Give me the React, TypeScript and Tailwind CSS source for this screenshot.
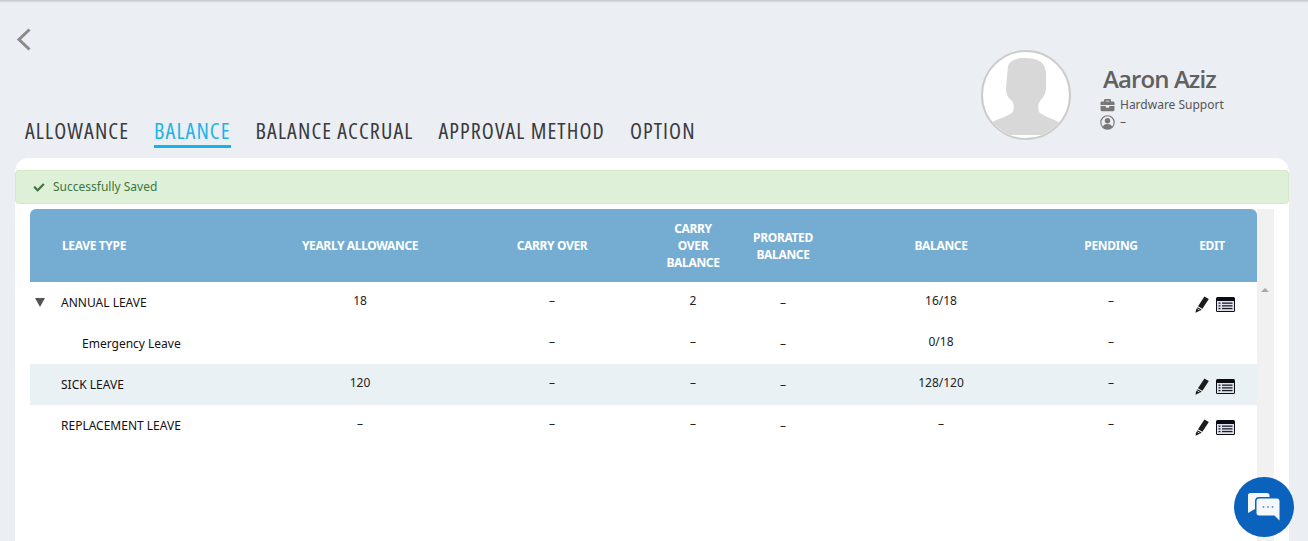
import { FaBriefcase, FaCheck } from "react-icons/fa";

const tabs = ["ALLOWANCE", "BALANCE", "BALANCE ACCRUAL", "APPROVAL METHOD", "OPTION"];

const gridCols = "grid grid-cols-[233px_194px_190px_92px_88px_228px_112px_90px]";

type Row = {
  name: string;
  values: string[];
  sub?: boolean;
  open?: boolean;
  shaded?: boolean;
  actions?: boolean;
};

const rows: Row[] = [
  { name: "ANNUAL LEAVE", values: ["18", "–", "2", "–", "16/18", "–"], open: true, actions: true },
  { name: "Emergency Leave", values: ["", "–", "–", "–", "0/18", "–"], sub: true },
  { name: "SICK LEAVE", values: ["120", "–", "–", "–", "128/120", "–"], shaded: true, actions: true },
  { name: "REPLACEMENT LEAVE", values: ["–", "–", "–", "–", "–", "–"], actions: true },
];

function PencilIcon() {
  return (
    <svg width="14" height="17" viewBox="0 0 14 17">
      <path d="M9.4 0.4 L13.8 3 L7.4 12.8 L3 10.2 Z" fill="#1c1c1c" />
      <path d="M2.6 11.2 L6.6 13.6 L5.6 14.2 L0.6 16.8 L0.9 14 Z" fill="#1c1c1c" />
      <path d="M2.4 12.8 L4.6 14.1" stroke="#fff" strokeWidth="0.8" />
    </svg>
  );
}

function ListIcon() {
  return (
    <svg width="19" height="15" viewBox="0 0 19 15">
      <rect x="0" y="0" width="19" height="15" rx="1.5" fill="#0c0c14" />
      <rect x="1" y="4" width="17" height="10" fill="#dfe4ec" />
      <g fill="#1c1c28">
        <rect x="2.5" y="5.5" width="2" height="1.3" />
        <rect x="2.5" y="8.2" width="2" height="1.3" />
        <rect x="2.5" y="10.9" width="2" height="1.3" />
        <rect x="6" y="5.5" width="10.5" height="1.3" />
        <rect x="6" y="8.2" width="10.5" height="1.3" />
        <rect x="6" y="10.9" width="10.5" height="1.3" />
      </g>
    </svg>
  );
}

function AvatarSilhouette() {
  return (
    <svg width="86" height="86" viewBox="0 0 86 86">
      <path
        d="M25 14 C27 8 34 6 42 6 C53 6 62 9 63 20 L63 35 C63 42 60 46 57 49 C55 52 55 56 56 60 C60 64 70 67 80 72 C78 78 70 82 60 83 L26 83 C16 82 8 78 5 72 C14 67 24 65 30 60 C31 55 31 52 29 49 C25 46 23 42 23 36 Z"
        fill="#d8d8d9"
      />
    </svg>
  );
}

function UserCircleIcon() {
  return (
    <svg width="15" height="15" viewBox="0 0 15 15">
      <circle cx="7.5" cy="7.5" r="6.7" fill="none" stroke="#777" strokeWidth="1.1" />
      <circle cx="7.5" cy="5.8" r="2.7" fill="#777" />
      <path d="M2.8 12 C3.6 9.6 5.4 9 7.5 9 C9.6 9 11.4 9.6 12.2 12 C11 13.4 9.3 14 7.5 14 C5.7 14 4 13.4 2.8 12 Z" fill="#777" />
    </svg>
  );
}

function ChatIcon() {
  return (
    <svg width="32" height="28" viewBox="0 0 32 28">
      <path d="M2 0 H19 C20.5 0 21.5 1 21.5 2.5 V4 H11 C8.5 4 7 5.5 7 8 V16 L0 20 V2 C0 1 1 0 2 0 Z" fill="#f4f7fb" />
      <path d="M11 5.5 H29 C30.5 5.5 31.5 6.5 31.5 8 V27.5 L26.5 22.5 H11 C9.5 22.5 8.5 21.5 8.5 20 V8 C8.5 6.5 9.5 5.5 11 5.5 Z" fill="#f4f7fb" />
      <circle cx="15.5" cy="14" r="0.9" fill="#5f8fc4" />
      <circle cx="20" cy="14" r="0.9" fill="#5f8fc4" />
      <circle cx="24.5" cy="14" r="0.9" fill="#5f8fc4" />
    </svg>
  );
}

export default function App() {
  return (
    <div className="relative h-[541px] w-[1308px] overflow-hidden bg-[#ebeef3] font-['Noto_Sans','Open_Sans',sans-serif] text-[#222]">
      <div className="h-[3px] bg-gradient-to-b from-[#c4c6c9] to-[#ebeef3]" />

      <div className="h-[155px] pl-[15px] pr-[19px]">
        <div className="flex h-full justify-between">
          <div className="flex flex-col justify-between">
            <svg className="mt-[25px] ml-px" width="16" height="23" viewBox="0 0 16 23">
              <path d="M13.5 1.5 L3 11.5 L13.5 21.5" fill="none" stroke="#8a8a8a" strokeWidth="3" />
            </svg>
            <div className="flex gap-[25px] pl-[10px] font-['Open_Sans',sans-serif] font-stretch-[75%] text-[22px] leading-[26px] tracking-[1.1px] text-[#3a3a40]">
              {tabs.map((tab) => (
                <div
                  key={tab}
                  className={
                    tab === "BALANCE"
                      ? "mb-[10px] border-b-[3px] border-[#12b5ea] pb-[2px] text-[#1fb3e8]"
                      : "mb-[15px]"
                  }
                >
                  {tab}
                </div>
              ))}
            </div>
          </div>

          <div className="mt-[47px] flex w-[308px] gap-[32px] self-start">
            <div className="flex h-[90px] w-[90px] shrink-0 items-end justify-center overflow-hidden rounded-full border-2 border-[#cccccc] bg-white">
              <AvatarSilhouette />
            </div>
            <div className="pt-[14px] text-[#666]">
              <div className="font-['Open_Sans',sans-serif] text-[24px] font-semibold leading-[30px] tracking-[-0.9px] text-[#606060]">Aaron Aziz</div>
              <div className="-ml-[3px] mt-[2px] flex items-center gap-[5px] text-[12px] leading-[18px] text-[#555]">
                <FaBriefcase className="h-[14px] w-[15px] text-[#777]" />
                Hardware Support
              </div>
              <div className="-ml-[3px] flex items-center gap-[5px] text-[12px] leading-[16px] text-[#555]">
                <UserCircleIcon />–
              </div>
            </div>
          </div>
        </div>
      </div>

      <div className="ml-[15px] mr-[19px] h-[500px] rounded-t-[14px] bg-white pt-3">
        <div className="flex h-[34px] items-center gap-[8px] rounded-[4px] border border-[#d6e9c6] bg-[#dff0d8] pl-[17px] text-[12px] text-[#3c763d]">
          <FaCheck className="h-[11px] w-[12px]" />
          Successfully Saved
        </div>

        <div className="ml-[15px] mt-[5px] flex">
          <div className="w-[1227px]">
            <div className={`${gridCols} h-[73px] items-center rounded-t-[6px] bg-[#75acd1] text-center text-[12px] font-bold leading-[17px] tracking-[-0.35px] text-white`}>
              <div className="pl-[32px] text-left">LEAVE TYPE</div>
              <div>YEARLY ALLOWANCE</div>
              <div>CARRY OVER</div>
              <div>
                CARRY
                <br />
                OVER
                <br />
                BALANCE
              </div>
              <div>
                PRORATED
                <br />
                BALANCE
              </div>
              <div>BALANCE</div>
              <div>PENDING</div>
              <div>EDIT</div>
            </div>

            {rows.map((row) => (
              <div
                key={row.name}
                className={`${gridCols} h-[41px] items-center text-center text-[12px] text-[#222] ${row.shaded ? "bg-[#eaf1f5]" : ""}`}
              >
                <div className={`relative text-left text-[#111] ${row.sub ? "pl-[52px]" : "pl-[31px]"}`}>
                  {row.open && (
                    <span className="absolute left-[5px] top-[4px] h-0 w-0 border-x-[5px] border-t-[9px] border-x-transparent border-t-[#555]" />
                  )}
                  {row.name}
                </div>
                {row.values.map((value, i) => (
                  <div key={i} className={i === 3 ? "" : "-mt-[4px]"}>
                    {value}
                  </div>
                ))}
                <div className="flex items-center justify-center gap-[7px] pl-[6px] pt-[3px]">
                  {row.actions && (
                    <>
                      <PencilIcon />
                      <ListIcon />
                    </>
                  )}
                </div>
              </div>
            ))}
          </div>

          <div className="relative h-[400px] w-[17px] bg-[#f1f1f1]">
            <span className="absolute left-[4px] top-[79px] h-0 w-0 border-x-[4px] border-b-[4px] border-x-transparent border-b-[#a8a8a8]" />
          </div>
        </div>
      </div>

      <div className="absolute left-[1234px] top-[477px] flex h-[60px] w-[60px] items-center justify-center rounded-full bg-[#0a62bd]">
        <ChatIcon />
      </div>
    </div>
  );
}
